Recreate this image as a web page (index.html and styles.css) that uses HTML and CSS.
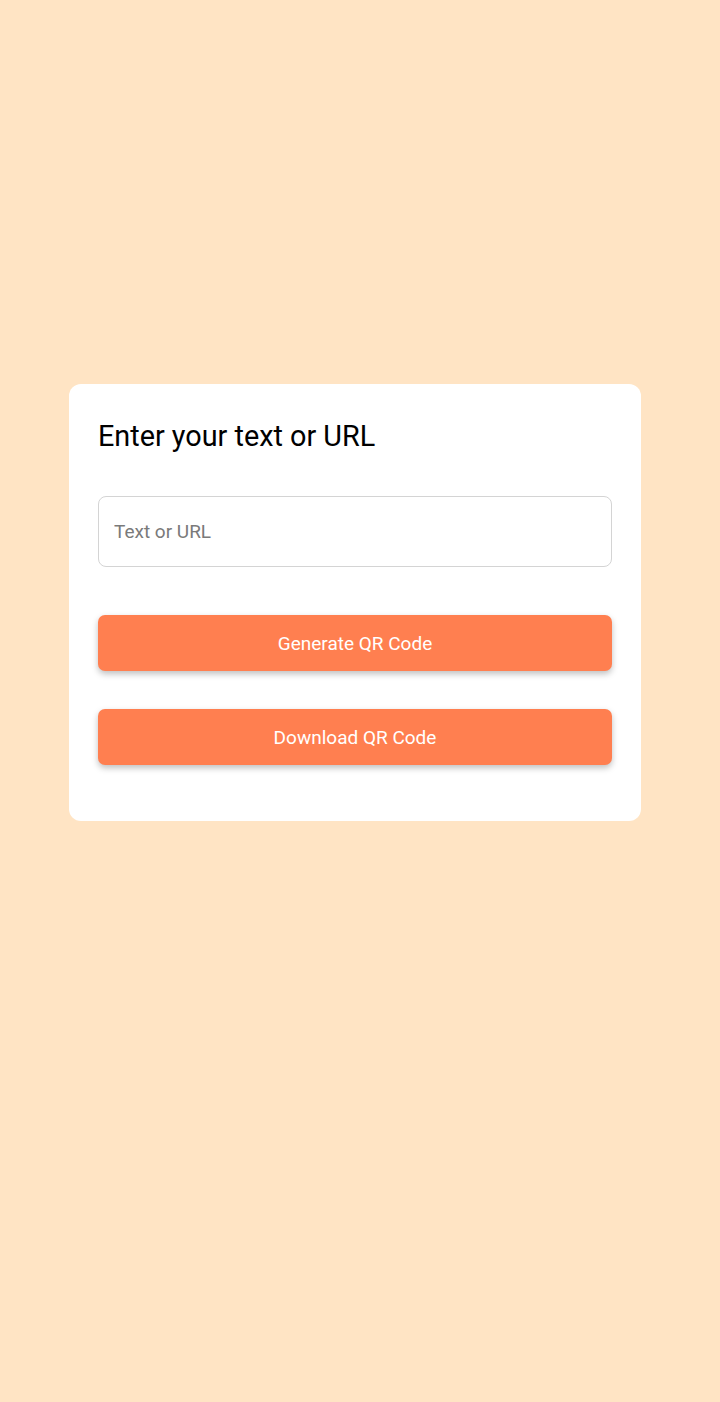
FILE: index.html
```html
<!DOCTYPE html>
<html>
<head>
<meta charset="utf-8">
<link rel="stylesheet" href="styles.css">
</head>
<body>
<main class="page">
  <section class="card">
    <h1 class="title">Enter your text or URL</h1>
    <input class="field" type="text" placeholder="Text or URL">
    <button class="btn btn-first">Generate QR Code</button>
    <button class="btn">Download QR Code</button>
  </section>
</main>
</body>
</html>
```

FILE: styles.css
```css
html, body {
  margin: 0;
  padding: 0;
  height: 100%;
}
body {
  background: #FFE4C4;
  font-family: Roboto, "Noto Sans", sans-serif;
}
.page {
  height: 1402px;
  display: flex;
  align-items: flex-start;
  justify-content: flex-start;
  padding: 384px 0 0 69px;
  box-sizing: border-box;
}
.card {
  width: 572px;
  box-sizing: border-box;
  background: #fff;
  border-radius: 12px;
  padding: 34px 29px 56px 29px;
  display: flex;
  flex-direction: column;
}
.title {
  margin: 0;
  font-size: 28.8px;
  font-weight: 400;
  color: #000;
  line-height: 36px;
}
.field {
  margin-top: 42px;
  height: 71px;
  box-sizing: border-box;
  border: 1.5px solid #d4d4d4;
  border-radius: 8px;
  padding: 0 15px;
  font-family: inherit;
  font-size: 19px;
  color: #333;
  outline: none;
}
.field::placeholder {
  color: #7a7a7a;
}
.btn {
  margin-top: 38px;
  height: 56px;
  border: none;
  border-radius: 7px;
  background: #FF7F50;
  color: #fff;
  font-family: inherit;
  font-size: 19px;
  box-shadow: 0 3px 6px rgba(0,0,0,0.25);
}
.btn-first {
  margin-top: 48px;
}
```
